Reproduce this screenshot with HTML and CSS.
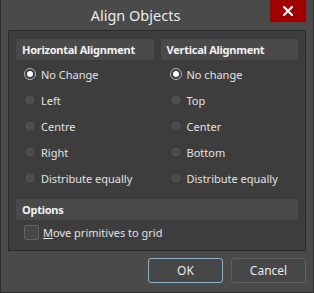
FILE: index.html
```html
<!DOCTYPE html>
<html>
<head>
<meta charset="utf-8">
<link rel="stylesheet" href="styles.css">
</head>
<body>
<div class="window">
  <div class="titlebar">
    <div class="title">Align Objects</div>
    <div class="close"><svg width="10" height="10" viewBox="0 0 10 10"><path d="M1 1L9 9M9 1L1 9" stroke="#fff" stroke-width="2.2" stroke-linecap="square"/></svg></div>
  </div>
  <div class="content">
    <div class="panel">
      <div class="cols">
        <div class="group">
          <div class="header">Horizontal Alignment</div>
          <div class="list">
            <div class="row"><span class="radio checked"></span><span class="label">No Change</span></div>
            <div class="row"><span class="radio"></span><span class="label">Left</span></div>
            <div class="row"><span class="radio"></span><span class="label">Centre</span></div>
            <div class="row"><span class="radio"></span><span class="label">Right</span></div>
            <div class="row"><span class="radio"></span><span class="label">Distribute equally</span></div>
          </div>
        </div>
        <div class="group right">
          <div class="header">Vertical Alignment</div>
          <div class="list">
            <div class="row"><span class="radio checked"></span><span class="label">No change</span></div>
            <div class="row"><span class="radio"></span><span class="label">Top</span></div>
            <div class="row"><span class="radio"></span><span class="label">Center</span></div>
            <div class="row"><span class="radio"></span><span class="label">Bottom</span></div>
            <div class="row"><span class="radio"></span><span class="label">Distribute equally</span></div>
          </div>
        </div>
      </div>
      <div class="header options">Options</div>
      <div class="row check-row"><span class="checkbox"></span><span class="label"><u>M</u>ove primitives to grid</span></div>
    </div>
  </div>
  <div class="buttons">
    <div class="btn ok">OK</div>
    <div class="btn">Cancel</div>
  </div>
</div>
</body>
</html>
```
FILE: styles.css
```css
* { box-sizing: border-box; }
html, body { margin: 0; padding: 0; background: #4a4a4a; }
body { font-family: "Noto Sans", "Open Sans", sans-serif; font-size: 11px; color: #e6e6e6; }
.window {
  width: 314px; height: 293px;
  background: #4a4a4a;
  border: 1px solid #2e2e2e;
  border-top: none;
  display: flex; flex-direction: column;
}
.titlebar {
  height: 30px;
  display: flex; align-items: flex-start;
}
.title {
  flex: 1;
  text-align: center;
  font-size: 14.5px;
  line-height: 30px;
  color: #ececec;
}
.close {
  width: 36px; height: 22px;
  background: #a00000;
  display: flex; align-items: center; justify-content: center;
  margin-right: 7px;
}
.content { padding: 0 7px 0 7px; }
.panel {
  background: #3d3d3d;
  border: 1px solid #2a2a2a;
  height: 221px;
  padding: 8px 7px 0 7px;
}
.cols { display: flex; gap: 7px; }
.group { flex: 1; }
.header {
  height: 21px;
  background: #4a4a4a;
  font-weight: bold;
  color: #f2f2f2;
  line-height: 21px;
  padding-left: 6px;
  letter-spacing: -0.25px;
}
.list { margin-top: 1px; padding-left: 8px; }
.right .list { padding-left: 9px; }
.row { height: 26px; display: flex; align-items: center; }
.radio {
  width: 12px; height: 12px;
  border-radius: 50%;
  background: #4d4d4d;
  border: 1px solid #353535;
  margin-right: 5px;
  flex: none;
  display: flex; align-items: center; justify-content: center;
}
.radio.checked { border: 1.5px solid #aab8c4; background: #3a3a3a; }
.radio.checked::after {
  content: ""; width: 6px; height: 6px; border-radius: 50%; background: #fff;
}
.label { color: #e2e2e2; white-space: nowrap; }
.options { margin-top: 8px; }
.check-row { height: 25px; padding-left: 8px; }
.checkbox {
  width: 15px; height: 15px;
  background: #474747;
  border: 1px solid #646464;
  border-radius: 2px;
  margin-right: 4px;
}
.buttons {
  display: flex; justify-content: flex-end;
  gap: 8px;
  padding: 7px 7px 0 0;
}
.btn {
  width: 75px; height: 25px;
  border: 1px solid #606060;
  border-radius: 3px;
  background: #474747;
  display: flex; align-items: center; justify-content: center;
  color: #e8e8e8;
  font-size: 12px;
}
.btn.ok { border-color: #8fb2c8; }
```
